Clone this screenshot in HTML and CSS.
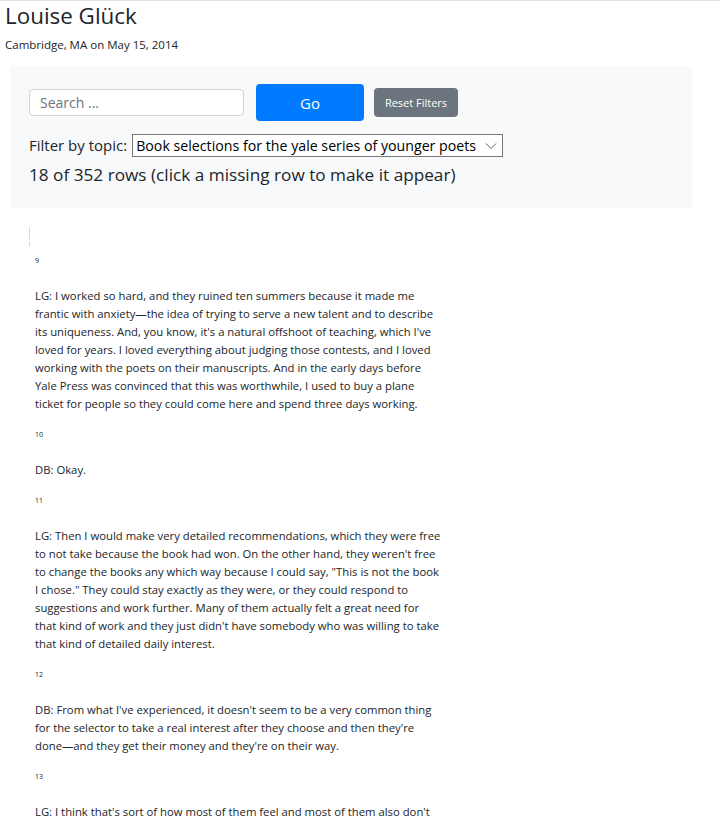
FILE: index.html
```html
<!DOCTYPE html>
<html lang="en">
<head>
<meta charset="utf-8">
<title>Louise Glück</title>
<link rel="stylesheet" href="styles.css">
</head>
<body>
<div class="page">
  <h1 class="title">Louise Glück</h1>
  <div class="subtitle">Cambridge, MA on May 15, 2014</div>

  <div class="panel">
    <div class="controls">
      <input class="search" type="text" placeholder="Search ...">
      <button class="btn btn-go">Go</button>
      <button class="btn btn-reset">Reset Filters</button>
    </div>
    <div class="filter-row">
      <label class="filter-label" for="topic">Filter by topic:</label>
      <span class="select-wrap">
        <select id="topic" class="topic">
          <option>Book selections for the yale series of younger poets</option>
        </select>
        <svg class="chevron" width="12" height="8" viewBox="0 0 12 8" aria-hidden="true">
          <path d="M1 1.5 L6 6.5 L11 1.5" fill="none" stroke="#555" stroke-width="1"/>
        </svg>
      </span>
    </div>
    <div class="count">18 of 352 rows (click a missing row to make it appear)</div>
  </div>

  <div class="transcript">
    <div class="gap-marker"></div>

    <div class="row">
      <div class="num">9</div>
      <p class="text">LG: I worked so hard, and they ruined ten summers because it made me frantic with anxiety—the idea of trying to serve a new talent and to describe its uniqueness. And, you know, it's a natural offshoot of teaching, which I've loved for years. I loved everything about judging those contests, and I loved working with the poets on their manuscripts. And in the early days before Yale Press was convinced that this was worthwhile, I used to buy a plane ticket for people so they could come here and spend three days working.</p>
    </div>

    <div class="row">
      <div class="num">10</div>
      <p class="text">DB: Okay.</p>
    </div>

    <div class="row">
      <div class="num">11</div>
      <p class="text">LG: Then I would make very detailed recommendations, which they were free to not take because the book had won. On the other hand, they weren't free to change the books any which way because I could say, "This is not the book I chose." They could stay exactly as they were, or they could respond to suggestions and work further. Many of them actually felt a great need for that kind of work and they just didn't have somebody who was willing to take that kind of detailed daily interest.</p>
    </div>

    <div class="row">
      <div class="num">12</div>
      <p class="text">DB: From what I've experienced, it doesn't seem to be a very common thing for the selector to take a real interest after they choose and then they're done—and they get their money and they're on their way.</p>
    </div>

    <div class="row">
      <div class="num">13</div>
      <p class="text">LG: I think that's sort of how most of them feel and most of them also don't have the time. I was teaching, and I had the summers, so I could give them that.</p>
    </div>
  </div>
</div>
</body>
</html>
```

FILE: styles.css
```css
html, body {
  margin: 0;
  padding: 0;
  background: #ffffff;
}

body {
  font-family: "Open Sans", "Noto Sans", "Liberation Sans", sans-serif;
  color: #212529;
  border-top: 1px solid #dee2e6;
}

.page {
  padding: 0 5px;
}

.title {
  margin: 0;
  font-size: 22.4px;
  font-weight: 400;
  line-height: 30px;
  color: #212529;
}

.subtitle {
  margin-top: 5px;
  font-size: 11.5px;
  line-height: 18px;
}

.panel {
  margin: 12px 0 0 6px;
  width: 681px;
  box-sizing: border-box;
  background: #f8f9fa;
  padding: 18px;
}

.controls {
  display: flex;
  align-items: center;
}

.search {
  width: 215px;
  height: 27px;
  box-sizing: border-box;
  border: 1px solid #ced4da;
  border-radius: 4px;
  padding: 0 10px;
  font-family: inherit;
  font-size: 14px;
  color: #495057;
  background: #fff;
}

.search::placeholder {
  color: #6c757d;
}

.btn {
  font-family: inherit;
  border: 0;
  color: #fff;
  border-radius: 4px;
  cursor: pointer;
}

.btn-go {
  margin-left: 12px;
  width: 108px;
  height: 37px;
  background: #007bff;
  font-size: 15px;
}

.btn-reset {
  margin-left: 10px;
  height: 29px;
  width: 84px;
  padding: 0;
  background: #6c757d;
  font-size: 11px;
}

.filter-row {
  margin-top: 13px;
  display: flex;
  align-items: center;
  gap: 5px;
}

.filter-label {
  font-size: 15px;
  line-height: 23px;
}

.select-wrap {
  position: relative;
  display: inline-block;
  height: 23px;
}

.topic {
  -webkit-appearance: none;
  appearance: none;
  width: 371px;
  height: 23px;
  box-sizing: border-box;
  border: 1px solid #767676;
  border-radius: 0;
  background: #fff;
  font-family: inherit;
  font-size: 14.2px;
  color: #000;
  padding: 0 20px 0 3px;
  display: block;
}

.chevron {
  position: absolute;
  right: 6px;
  top: 8px;
  pointer-events: none;
}

.count {
  margin-top: 3px;
  font-size: 17.2px;
  line-height: 30px;
}

.transcript {
  padding: 19px 0 0 24px;
}

.gap-marker {
  height: 19px;
  width: 0;
  border-left: 1px dotted #b8c4cc;
  margin-bottom: 10px;
}

.row {
  padding-left: 6px;
  width: 407px;
}

.num {
  font-size: 7px;
  line-height: 10px;
  margin-bottom: 21px;
}

.text {
  margin: 0 0 17px;
  font-size: 11.3px;
  line-height: 18px;
}
```
